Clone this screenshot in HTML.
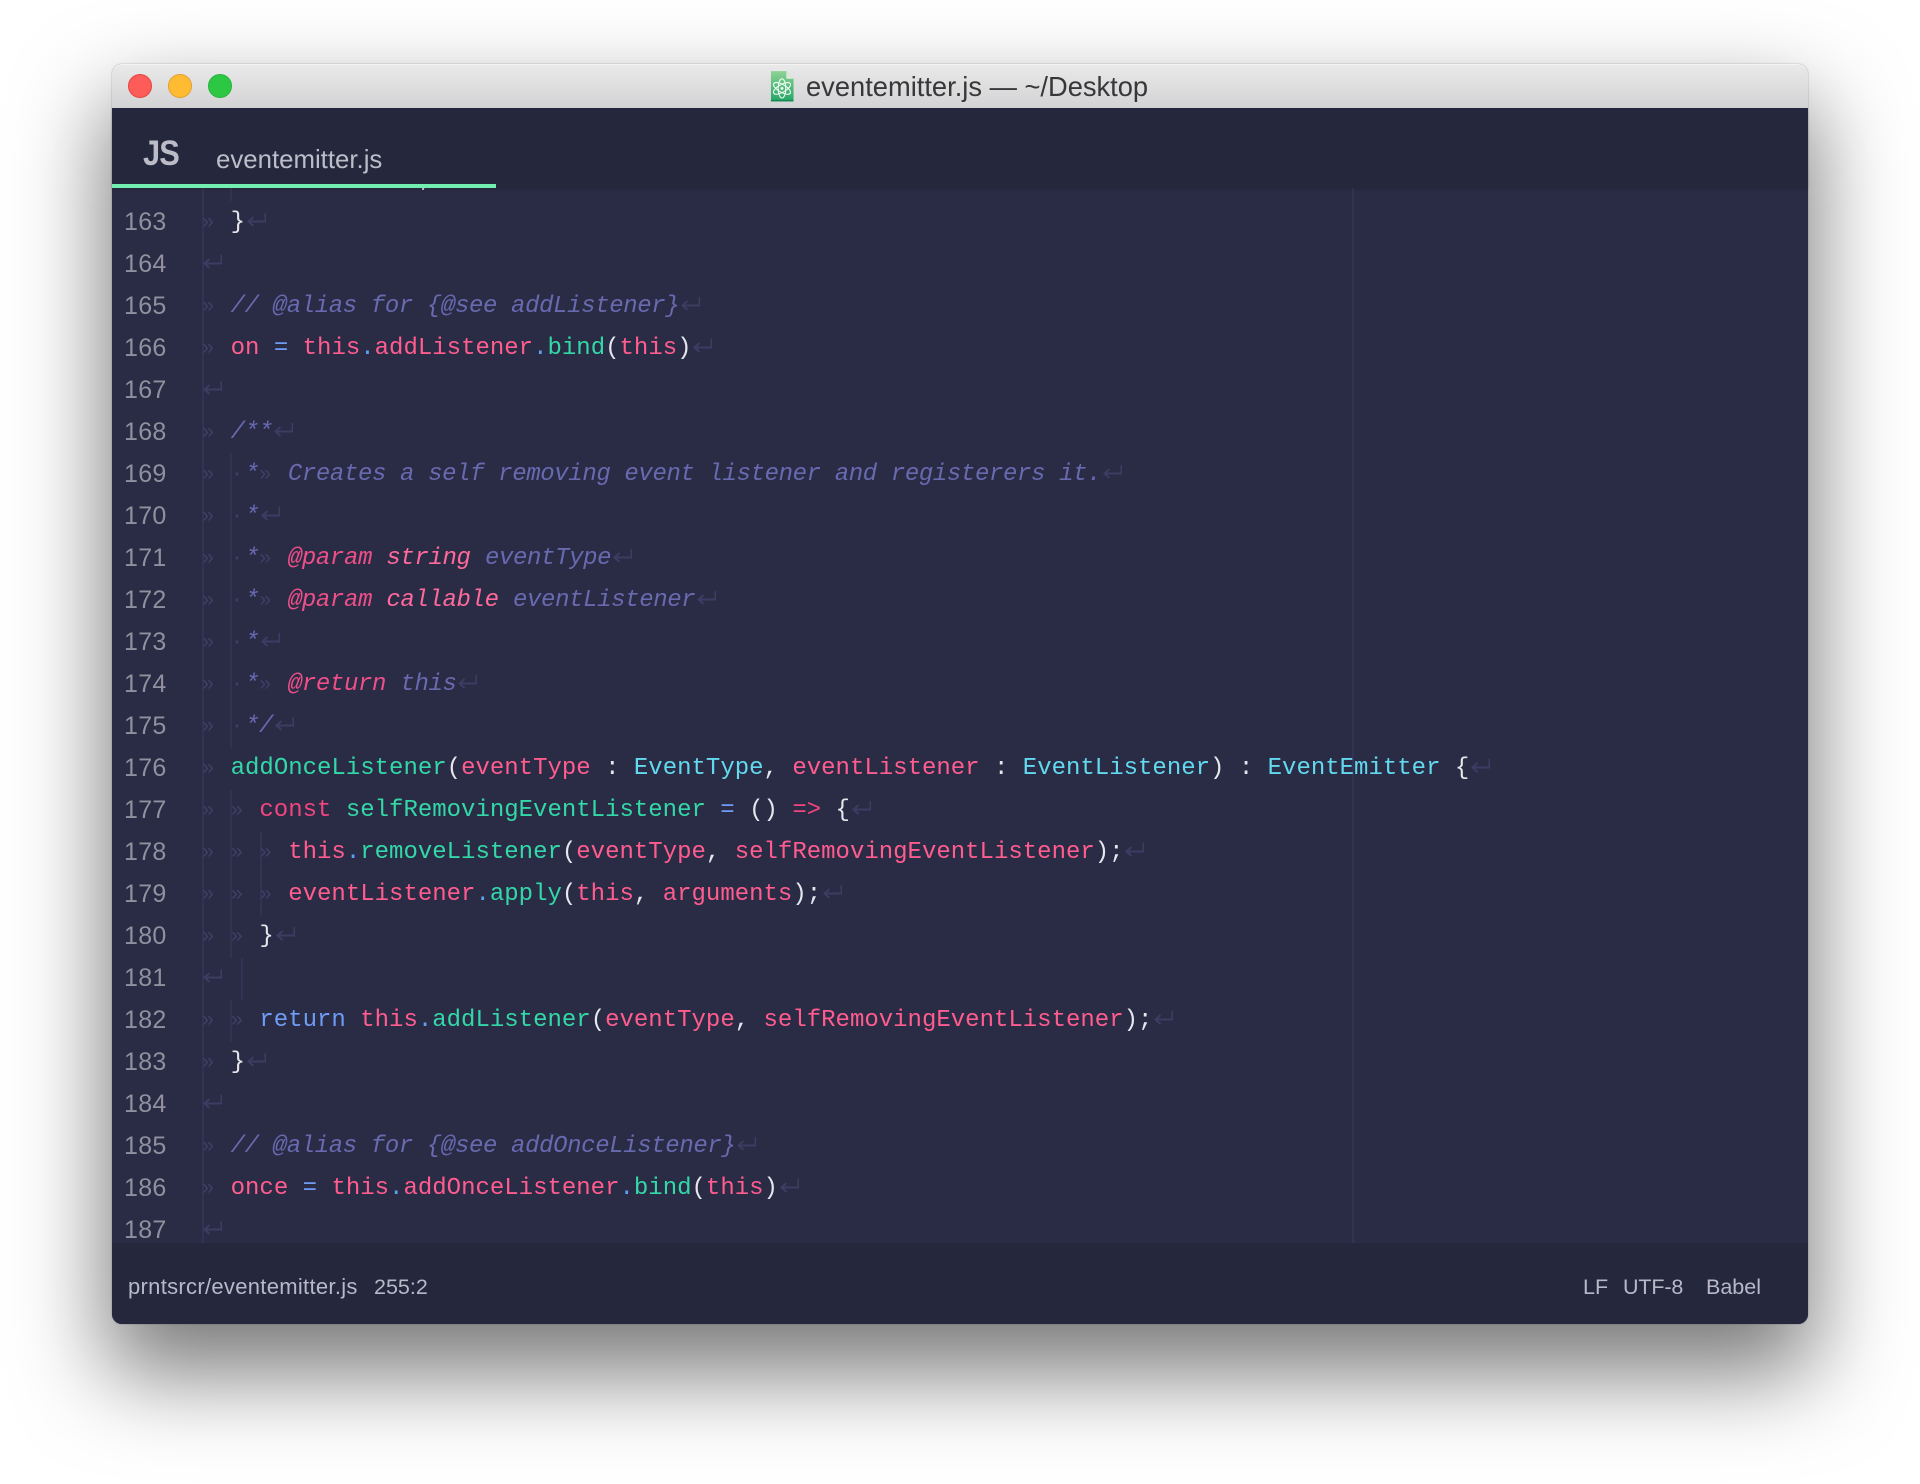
<!DOCTYPE html>
<html><head><meta charset="utf-8"><title>eventemitter.js</title>
<style>
html,body{margin:0;padding:0;width:1920px;height:1484px;background:#fff;overflow:hidden}
#w{position:absolute;left:112px;top:63.500px;width:1696px;height:1260.500px;border-radius:10px;background:#25273c;box-shadow:0 44px 90px 6px rgba(0,0,0,.52),0 0 1.500px rgba(0,0,0,.35)}
#t{position:absolute;left:0;top:0;width:1696px;height:44.500px;border-radius:10px 10px 0 0;background:linear-gradient(#eaeaea,#d3d2d4);box-shadow:inset 0 1px 0 #f4f4f4}
.c{position:absolute;top:10.500px;width:22px;height:22px;border-radius:50%;border:1px solid}
#tt{position:absolute;left:694px;top:0;font:27.300px/46px "Liberation Sans",sans-serif;color:#37373a;white-space:pre}
#ic{position:absolute;left:658px;top:6px}
#tab{position:absolute;left:0;top:44.500px;width:1696px;height:80px;background:#25273c;box-shadow:0 1px 2px rgba(0,0,0,.15);z-index:2}
#ac{position:absolute;left:0;top:76px;width:384px;height:4px;background:#72efb0}
#js{position:absolute;left:30.500px;top:25.500px;font:bold 35px/40px "Liberation Sans",sans-serif;color:#bcbcc9;letter-spacing:-1px;transform:scaleX(.88);transform-origin:0 0}
#fn{position:absolute;left:104px;top:32px;font:25.800px/40px "Liberation Sans",sans-serif;color:#bdbdca;white-space:pre}
#e{position:absolute;left:0;top:124.500px;width:1696px;height:1055px;background:#2a2b44;overflow:hidden}
#c{position:absolute;left:0;top:-29px;width:1696px}
.l{position:relative;height:42px;font:24px/44.500px "Liberation Mono",monospace;color:#e6e6ee;white-space:pre;padding-left:89.800px;box-sizing:border-box}
.l b{position:absolute;left:12px;top:-.5px;font:400 25px/43px "Liberation Sans",sans-serif;letter-spacing:.3px;color:#90909f}
.g{position:absolute;width:2px;background:#323354}
i,em,u,s,span{font-style:normal;text-decoration:none}
.n{color:#3d3f65;font-size:21px;letter-spacing:1.800px}
.k{color:#ff5c8f}
.r{color:#f0457f}
.y{color:#33d8a8}
.a{color:#62d9ee}
.q{color:#6f9cf5}
.o{color:#5d9ff0}
.d{color:#686ab0;font-style:italic;letter-spacing:-.38px}
.p{color:#ee4f88;font-style:italic;letter-spacing:-.38px}
.h{color:#ff6a9c;font-style:italic;letter-spacing:-.38px}
.v{display:inline-block;width:14.400px;height:42px;vertical-align:top;overflow:visible;position:relative;top:1px;left:.7px}
#st{position:absolute;left:0;top:1179.500px;width:1696px;height:81px;border-radius:0 0 10px 10px;background:#25273c;font:21.500px/30px "Liberation Sans",sans-serif;color:#b8b8c8}
#st div{position:absolute;top:28.500px;white-space:pre}
</style></head><body>
<svg width="0" height="0" style="position:absolute"><symbol id="z" viewBox="0 0 20 42"><path d="M19.500 11v8.500H3M7.500 15l-5 4.500 5 4.500" fill="none" stroke="#3b3d62" stroke-width="2"/></symbol></svg>
<div id="w">
<div id="t">
<div class="c" style="left:16px;background:#fd5c58;border-color:#e4453f"></div>
<div class="c" style="left:56px;background:#ffbc33;border-color:#e2a02c"></div>
<div class="c" style="left:96px;background:#2cc844;border-color:#27b33c"></div>
<svg id="ic" width="24" height="32" viewBox="0 0 25 33"><defs><linearGradient id="f" x1="0" y1="0" x2="0" y2="1"><stop offset="0" stop-color="#8ed295"/><stop offset="1" stop-color="#25a567"/></linearGradient></defs><path d="M1 1h16l7.500 8v23.500H1z" fill="url(#f)"/><path d="M17 1l7.500 8H17z" fill="#dfe8dc"/><path d="M1 31h23.500v1.500H1z" fill="#138a52"/><g fill="none" stroke="#f2fff4" stroke-width="1.100"><ellipse cx="12.500" cy="19" rx="10" ry="4" transform="rotate(30 12.500 19)"/><ellipse cx="12.500" cy="19" rx="10" ry="4" transform="rotate(-30 12.500 19)"/><ellipse cx="12.500" cy="19" rx="10" ry="4" transform="rotate(90 12.500 19)"/></g><circle cx="12.500" cy="19" r="1.500" fill="#f2fff4"/></svg>
<div id="tt">eventemitter.js — ~/Desktop</div>
</div>
<div id="tab"><div id="js">JS</div><div id="fn">eventemitter.js</div><div id="ac"></div></div>
<div id="e">
<div class="g" style="left:90px;top:0;height:1056px"></div>
<div class="g" style="left:118px;top:0;height:13px"></div>
<div class="g" style="left:118px;top:265px;height:295px"></div>
<div class="g" style="left:118px;top:602px;height:168px"></div>
<div class="g" style="left:148px;top:644px;height:84px"></div>
<div class="g" style="left:129px;top:770px;height:42px"></div>
<div class="g" style="left:118px;top:812px;height:42px"></div>
<div class="g" style="left:1240px;top:0;height:1056px"></div>
<div id="c">
<div class="l"><b>162</b><i class="n">» » </i><span class="q">return</span> <span class="k">this</span>;</div>
<div class="l"><b>163</b><i class="n">» </i>}<svg class="v"><use href="#z" width="20" height="42"/></svg></div>
<div class="l"><b>164</b><svg class="v"><use href="#z" width="20" height="42"/></svg></div>
<div class="l"><b>165</b><i class="n">» </i><span class="d">// @alias for {@see addListener}</span><svg class="v"><use href="#z" width="20" height="42"/></svg></div>
<div class="l"><b>166</b><i class="n">» </i><span class="k">on</span> <span class="q">=</span> <span class="k">this</span><span class="o">.</span><span class="k">addListener</span><span class="o">.</span><span class="y">bind</span>(<span class="k">this</span>)<svg class="v"><use href="#z" width="20" height="42"/></svg></div>
<div class="l"><b>167</b><svg class="v"><use href="#z" width="20" height="42"/></svg></div>
<div class="l"><b>168</b><i class="n">» </i><span class="d">/**</span><svg class="v"><use href="#z" width="20" height="42"/></svg></div>
<div class="l"><b>169</b><i class="n">» ·</i><span class="d">*</span><i class="n">» </i><span class="d">Creates a self removing event listener and registerers it.</span><svg class="v"><use href="#z" width="20" height="42"/></svg></div>
<div class="l"><b>170</b><i class="n">» ·</i><span class="d">*</span><svg class="v"><use href="#z" width="20" height="42"/></svg></div>
<div class="l"><b>171</b><i class="n">» ·</i><span class="d">*</span><i class="n">» </i><span class="p">@param</span> <span class="h">string</span> <span class="d">eventType</span><svg class="v"><use href="#z" width="20" height="42"/></svg></div>
<div class="l"><b>172</b><i class="n">» ·</i><span class="d">*</span><i class="n">» </i><span class="p">@param</span> <span class="h">callable</span> <span class="d">eventListener</span><svg class="v"><use href="#z" width="20" height="42"/></svg></div>
<div class="l"><b>173</b><i class="n">» ·</i><span class="d">*</span><svg class="v"><use href="#z" width="20" height="42"/></svg></div>
<div class="l"><b>174</b><i class="n">» ·</i><span class="d">*</span><i class="n">» </i><span class="p">@return</span> <span class="d">this</span><svg class="v"><use href="#z" width="20" height="42"/></svg></div>
<div class="l"><b>175</b><i class="n">» ·</i><span class="d">*/</span><svg class="v"><use href="#z" width="20" height="42"/></svg></div>
<div class="l"><b>176</b><i class="n">» </i><span class="y">addOnceListener</span>(<span class="k">eventType</span> : <span class="a">EventType</span>, <span class="k">eventListener</span> : <span class="a">EventListener</span>) : <span class="a">EventEmitter</span> {<svg class="v"><use href="#z" width="20" height="42"/></svg></div>
<div class="l"><b>177</b><i class="n">» » </i><span class="r">const</span> <span class="y">selfRemovingEventListener</span> <span class="q">=</span> () <span class="r">=&gt;</span> {<svg class="v"><use href="#z" width="20" height="42"/></svg></div>
<div class="l"><b>178</b><i class="n">» » » </i><span class="k">this</span><span class="o">.</span><span class="y">removeListener</span>(<span class="k">eventType</span>, <span class="k">selfRemovingEventListener</span>);<svg class="v"><use href="#z" width="20" height="42"/></svg></div>
<div class="l"><b>179</b><i class="n">» » » </i><span class="k">eventListener</span><span class="o">.</span><span class="y">apply</span>(<span class="k">this</span>, <span class="k">arguments</span>);<svg class="v"><use href="#z" width="20" height="42"/></svg></div>
<div class="l"><b>180</b><i class="n">» » </i>}<svg class="v"><use href="#z" width="20" height="42"/></svg></div>
<div class="l"><b>181</b><svg class="v"><use href="#z" width="20" height="42"/></svg></div>
<div class="l"><b>182</b><i class="n">» » </i><span class="q">return</span> <span class="k">this</span><span class="o">.</span><span class="y">addListener</span>(<span class="k">eventType</span>, <span class="k">selfRemovingEventListener</span>);<svg class="v"><use href="#z" width="20" height="42"/></svg></div>
<div class="l"><b>183</b><i class="n">» </i>}<svg class="v"><use href="#z" width="20" height="42"/></svg></div>
<div class="l"><b>184</b><svg class="v"><use href="#z" width="20" height="42"/></svg></div>
<div class="l"><b>185</b><i class="n">» </i><span class="d">// @alias for {@see addOnceListener}</span><svg class="v"><use href="#z" width="20" height="42"/></svg></div>
<div class="l"><b>186</b><i class="n">» </i><span class="k">once</span> <span class="q">=</span> <span class="k">this</span><span class="o">.</span><span class="k">addOnceListener</span><span class="o">.</span><span class="y">bind</span>(<span class="k">this</span>)<svg class="v"><use href="#z" width="20" height="42"/></svg></div>
<div class="l"><b>187</b><svg class="v"><use href="#z" width="20" height="42"/></svg></div>
</div>
</div>
<div id="st">
<div style="left:16px;font-size:22px;letter-spacing:.3px">prntsrcr/eventemitter.js</div>
<div style="left:262px">255:2</div>
<div style="left:1471px">LF</div>
<div style="left:1511px;letter-spacing:-.15px">UTF-8</div>
<div style="left:1594px">Babel</div>
</div>
</div>
</body></html>
